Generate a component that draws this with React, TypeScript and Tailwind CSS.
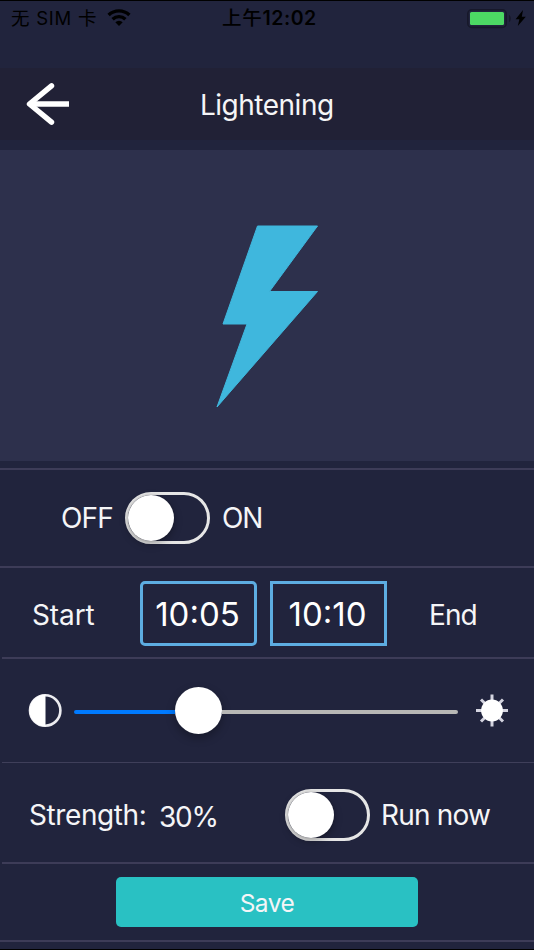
import React from 'react';

function Toggle({ className }: { className: string }) {
  return (
    <button
      className={`flex h-[52px] w-[85px] shrink-0 items-center rounded-full border-[3px] border-[#e6e6e6] ${className}`}
    >
      <span className="h-[46px] w-[46px] rounded-full bg-white shadow-[0_3px_8px_rgba(0,0,0,0.3),0_0_2px_rgba(0,0,0,0.2)]" />
    </button>
  );
}

function StatusBar() {
  return (
    <div className="flex h-[67px] shrink-0 items-start text-[18.5px] leading-[34px] text-black">
      <span className="ml-[11px] w-[96px] whitespace-nowrap tracking-[0.75px]">无 SIM 卡</span>
      <svg className="mt-[8px] h-[17px] w-[24px]" viewBox="0 0 24 17" fill="none" stroke="black" strokeWidth="3.4">
        <path d="M1.6 6.1a15 15 0 0 1 20.8 0" />
        <path d="M5.6 10.2a9.2 9.2 0 0 1 12.8 0" />
        <path d="M12 17L8.3 13.3a5.3 5.3 0 0 1 7.4 0Z" fill="black" stroke="none" />
      </svg>
      <span className="ml-[91px] w-[100px] whitespace-nowrap text-[19.5px] font-medium tracking-[0.8px]">
        上午<span className="font-semibold tracking-[0.5px]">12:02</span>
      </span>
      <svg className="ml-[145px] mt-[8px] h-[20px] w-[59px]" viewBox="0 0 59 20">
        <rect x="0.8" y="0.8" width="38.4" height="17.6" rx="4" fill="none" stroke="#17182a" strokeWidth="1.6" />
        <rect x="3" y="3" width="34" height="13" rx="1.5" fill="#4cd964" />
        <path d="M42 6c2.4 1 2.4 6 0 7Z" fill="#17182a" />
        <path d="M56 1L48.6 10.3h3.8L50.8 17l8-9.3h-4Z" fill="black" />
      </svg>
    </div>
  );
}

export default function App() {
  return (
    <div className="flex h-[950px] w-[534px] flex-col overflow-hidden border-y border-black bg-[#21243d] font-['Inter','Noto_Sans_CJK_SC',sans-serif] text-[28px] leading-[40px] text-[#f5f5f7]">
      <StatusBar />
      <header className="flex h-[72px] shrink-0 items-center bg-[#212136]">
        <svg className="ml-[26px] h-[44px] w-[44px]" viewBox="0 0 44 44" fill="none" stroke="white" strokeWidth="5.4">
          <path d="M43 22H5" />
          <path d="M25.5 3.8L3.5 22L25.5 40.2" strokeLinecap="round" strokeLinejoin="round" />
        </svg>
        <h1 className="ml-[130px] whitespace-nowrap pt-px text-[28px] tracking-[-0.5px]">Lightening</h1>
      </header>
      <div className="mt-[10px] h-[311px] shrink-0 bg-[#2d304c]">
        <svg className="ml-[215px] mt-[74px] h-[186px] w-[105px]" viewBox="215 224 105 186">
          <path
            d="M257.5 226H317.5L269.5 291.5H317.5L217 407L247 324H223Z"
            fill="#3fb7dd"
            stroke="#3fb7dd"
            strokeWidth="1"
            strokeLinejoin="round"
          />
        </svg>
      </div>

      <section className="mt-[7px] flex h-[98px] shrink-0 items-center border-t-2 border-[#3d3c58]">
        <span className="ml-[61px] w-[64px] whitespace-nowrap tracking-[-0.8px]">OFF</span>
        <Toggle className="" />
        <span className="ml-[12px] whitespace-nowrap tracking-[-1.2px]">ON</span>
      </section>

      <section className="flex h-[91px] shrink-0 items-center border-t-2 border-[#3d3c58] pt-[2px]">
        <span className="ml-[32px] mt-[2px] w-[108px] whitespace-nowrap tracking-[-0.1px]">Start</span>
        <span className="flex h-[65px] w-[117px] items-center justify-center rounded-[5px] border-[3px] border-[#5dade2] pr-[2px] text-[33px] text-white">
          10:05
        </span>
        <span className="ml-[13px] flex h-[65px] w-[117px] items-center justify-center border-[3px] border-[#5dade2] pr-[2px] text-[33px] text-white">
          10:10
        </span>
        <span className="ml-[42px] mt-[2px] whitespace-nowrap tracking-[-0.9px]">End</span>
      </section>

      <section className="ml-[2px] flex h-[105px] shrink-0 items-center border-t-2 border-[#3d3c58]">
        <svg className="ml-[26px] h-[34px] w-[34px]" viewBox="0 0 34 34">
          <circle cx="17.2" cy="16.5" r="15.2" fill="none" stroke="#ececf0" strokeWidth="2.6" />
          <path d="M17.5 0.5A16 16 0 0 0 17.5 32.5Z" fill="white" />
        </svg>
        <div className="ml-[12px] flex h-[47px] w-[384px] items-center">
          <span className="mt-[3px] h-[4px] w-[101px] rounded-l-full bg-[#007aff]" />
          <span className="h-[47px] w-[47px] rounded-full bg-white shadow-[0_4px_10px_rgba(0,0,0,0.3)]" />
          <span className="mt-[3px] h-[4px] flex-1 rounded-r-full bg-[#b7b7b5]" />
        </div>
        <svg className="ml-[17px] h-[34px] w-[34px]" viewBox="-17 -16.5 34 34" stroke="#d4d4e0" strokeWidth="3">
          <path d="M0-16V16M-16 0H16M-11-11L11 11M-11 11L11-11" />
          <circle r="10.9" fill="white" stroke="none" />
        </svg>
      </section>

      <section className="ml-[2px] flex h-[100px] shrink-0 items-center border-t border-[#3f3f5a] pt-[4px]">
        <span className="ml-[27px] mt-px w-[130px] whitespace-nowrap tracking-[-0.4px]">Strength:</span>
        <span className="mt-[4px] w-[126px] whitespace-nowrap tracking-[-1.2px]">30%</span>
        <Toggle className="" />
        <span className="ml-[11px] mt-px whitespace-nowrap tracking-[-0.8px]">Run now</span>
      </section>

      <section className="ml-[2px] flex h-[78px] shrink-0 items-start border-t-2 border-[#3d3c58]">
        <button className="ml-[114px] mt-[13px] h-[50px] w-[302px] rounded-[5px] bg-[#29c1c3] pt-px text-[24.5px] tracking-[-0.5px]">
          Save
        </button>
      </section>
      <div className="h-[2px] shrink-0 bg-[#3d3c58]" />
    </div>
  );
}
